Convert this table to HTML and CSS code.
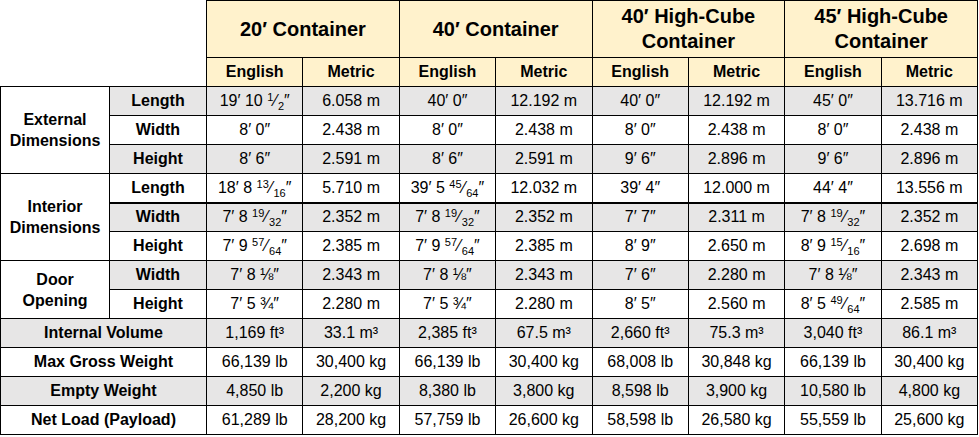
FILE: index.html
```html
<!DOCTYPE html>
<html lang="en">
<head>
<meta charset="utf-8">
<title>Shipping Container Dimensions</title>
<link rel="stylesheet" href="styles.css">
</head>
<body>
<table class="spec">
  <colgroup>
    <col class="c-grp"><col class="c-sub">
    <col class="c-val"><col class="c-val"><col class="c-val"><col class="c-val">
    <col class="c-val"><col class="c-val"><col class="c-val"><col class="c-val">
  </colgroup>
  <thead>
    <tr class="h1">
      <th class="blank" colspan="2" rowspan="2"></th>
      <th colspan="2">20′ Container</th>
      <th colspan="2">40′ Container</th>
      <th colspan="2">40′ High-Cube<br>Container</th>
      <th colspan="2">45′ High-Cube<br>Container</th>
    </tr>
    <tr class="h2">
      <th>English</th><th>Metric</th>
      <th>English</th><th>Metric</th>
      <th>English</th><th>Metric</th>
      <th>English</th><th>Metric</th>
    </tr>
  </thead>
  <tbody>
    <tr class="gray">
      <th class="grp" rowspan="3">External<br>Dimensions</th>
      <th class="sub">Length</th>
      <td>19′ 10 <span class="fr"><sup>1</sup><span class="sl">⁄</span><sub>2</sub></span>″</td><td>6.058 m</td>
      <td>40′ 0″</td><td>12.192 m</td>
      <td>40′ 0″</td><td>12.192 m</td>
      <td>45′ 0″</td><td>13.716 m</td>
    </tr>
    <tr>
      <th class="sub">Width</th>
      <td>8′ 0″</td><td>2.438 m</td>
      <td>8′ 0″</td><td>2.438 m</td>
      <td>8′ 0″</td><td>2.438 m</td>
      <td>8′ 0″</td><td>2.438 m</td>
    </tr>
    <tr class="gray">
      <th class="sub">Height</th>
      <td>8′ 6″</td><td>2.591 m</td>
      <td>8′ 6″</td><td>2.591 m</td>
      <td>9′ 6″</td><td>2.896 m</td>
      <td>9′ 6″</td><td>2.896 m</td>
    </tr>
    <tr class="thick">
      <th class="grp" rowspan="3">Interior<br>Dimensions</th>
      <th class="sub">Length</th>
      <td>18′ 8 <span class="fr"><sup>13</sup><span class="sl">⁄</span><sub>16</sub></span>″</td><td>5.710 m</td>
      <td>39′ 5 <span class="fr"><sup>45</sup><span class="sl">⁄</span><sub>64</sub></span>″</td><td>12.032 m</td>
      <td>39′ 4″</td><td>12.000 m</td>
      <td>44′ 4″</td><td>13.556 m</td>
    </tr>
    <tr class="gray">
      <th class="sub">Width</th>
      <td>7′ 8 <span class="fr"><sup>19</sup><span class="sl">⁄</span><sub>32</sub></span>″</td><td>2.352 m</td>
      <td>7′ 8 <span class="fr"><sup>19</sup><span class="sl">⁄</span><sub>32</sub></span>″</td><td>2.352 m</td>
      <td>7′ 7″</td><td>2.311 m</td>
      <td>7′ 8 <span class="fr"><sup>19</sup><span class="sl">⁄</span><sub>32</sub></span>″</td><td>2.352 m</td>
    </tr>
    <tr>
      <th class="sub">Height</th>
      <td>7′ 9 <span class="fr"><sup>57</sup><span class="sl">⁄</span><sub>64</sub></span>″</td><td>2.385 m</td>
      <td>7′ 9 <span class="fr"><sup>57</sup><span class="sl">⁄</span><sub>64</sub></span>″</td><td>2.385 m</td>
      <td>8′ 9″</td><td>2.650 m</td>
      <td>8′ 9 <span class="fr"><sup>15</sup><span class="sl">⁄</span><sub>16</sub></span>″</td><td>2.698 m</td>
    </tr>
    <tr class="gray">
      <th class="grp" rowspan="2">Door<br>Opening</th>
      <th class="sub">Width</th>
      <td>7′ 8 ⅛″</td><td>2.343 m</td>
      <td>7′ 8 ⅛″</td><td>2.343 m</td>
      <td>7′ 6″</td><td>2.280 m</td>
      <td>7′ 8 ⅛″</td><td>2.343 m</td>
    </tr>
    <tr>
      <th class="sub">Height</th>
      <td>7′ 5 ¾″</td><td>2.280 m</td>
      <td>7′ 5 ¾″</td><td>2.280 m</td>
      <td>8′ 5″</td><td>2.560 m</td>
      <td>8′ 5 <span class="fr"><sup>49</sup><span class="sl">⁄</span><sub>64</sub></span>″</td><td>2.585 m</td>
    </tr>
    <tr class="gray">
      <th class="sub" colspan="2">Internal Volume</th>
      <td>1,169 ft³</td><td>33.1 m³</td>
      <td>2,385 ft³</td><td>67.5 m³</td>
      <td>2,660 ft³</td><td>75.3 m³</td>
      <td>3,040 ft³</td><td>86.1 m³</td>
    </tr>
    <tr>
      <th class="sub" colspan="2">Max Gross Weight</th>
      <td>66,139 lb</td><td>30,400 kg</td>
      <td>66,139 lb</td><td>30,400 kg</td>
      <td>68,008 lb</td><td>30,848 kg</td>
      <td>66,139 lb</td><td>30,400 kg</td>
    </tr>
    <tr class="gray">
      <th class="sub" colspan="2">Empty Weight</th>
      <td>4,850 lb</td><td>2,200 kg</td>
      <td>8,380 lb</td><td>3,800 kg</td>
      <td>8,598 lb</td><td>3,900 kg</td>
      <td>10,580 lb</td><td>4,800 kg</td>
    </tr>
    <tr>
      <th class="sub" colspan="2">Net Load (Payload)</th>
      <td>61,289 lb</td><td>28,200 kg</td>
      <td>57,759 lb</td><td>26,600 kg</td>
      <td>58,598 lb</td><td>26,580 kg</td>
      <td>55,559 lb</td><td>25,600 kg</td>
    </tr>
  </tbody>
</table>
</body>
</html>
```

FILE: styles.css
```css
html, body {
  margin: 0;
  padding: 0;
  background: #ffffff;
}

.spec {
  border-collapse: collapse;
  table-layout: fixed;
  width: 977px;
  font-family: "Liberation Sans", Arial, sans-serif;
  font-size: 16px;
  color: #000000;
}

.c-grp { width: 109px; }
.c-sub { width: 97px; }
.c-val { width: 96.375px; }

.spec th,
.spec td {
  border: 1px solid #000000;
  padding: 0;
  text-align: center;
  vertical-align: middle;
  white-space: nowrap;
}

.spec th.blank {
  border-top: none;
  border-left: none;
  background: #ffffff;
}

.h1 th {
  height: 56px;
  font-size: 20px;
  font-weight: bold;
  line-height: 25px;
  background: #fff2cc;
}

.h2 th {
  height: 28px;
  font-weight: bold;
  background: #fff2cc;
}

.spec tbody tr {
  height: 29px;
}

.spec tbody td {
  font-weight: normal;
  line-height: 18px;
}

.spec tbody th {
  font-weight: bold;
}

.spec th.grp {
  background: #ffffff;
  line-height: 21px;
}

.gray td,
.gray th.sub {
  background: #e7e6e6;
}

.thick td,
.thick th.sub {
  border-bottom: 2px solid #000000;
}

.fr {
  white-space: nowrap;
}

.fr sup,
.fr sub {
  font-size: 11px;
  line-height: 0;
}

.fr sup {
  vertical-align: 5px;
}

.fr sub {
  vertical-align: -4px;
}

.fr .sl {
  display: inline-block;
  margin: 0 1px;
}
```
